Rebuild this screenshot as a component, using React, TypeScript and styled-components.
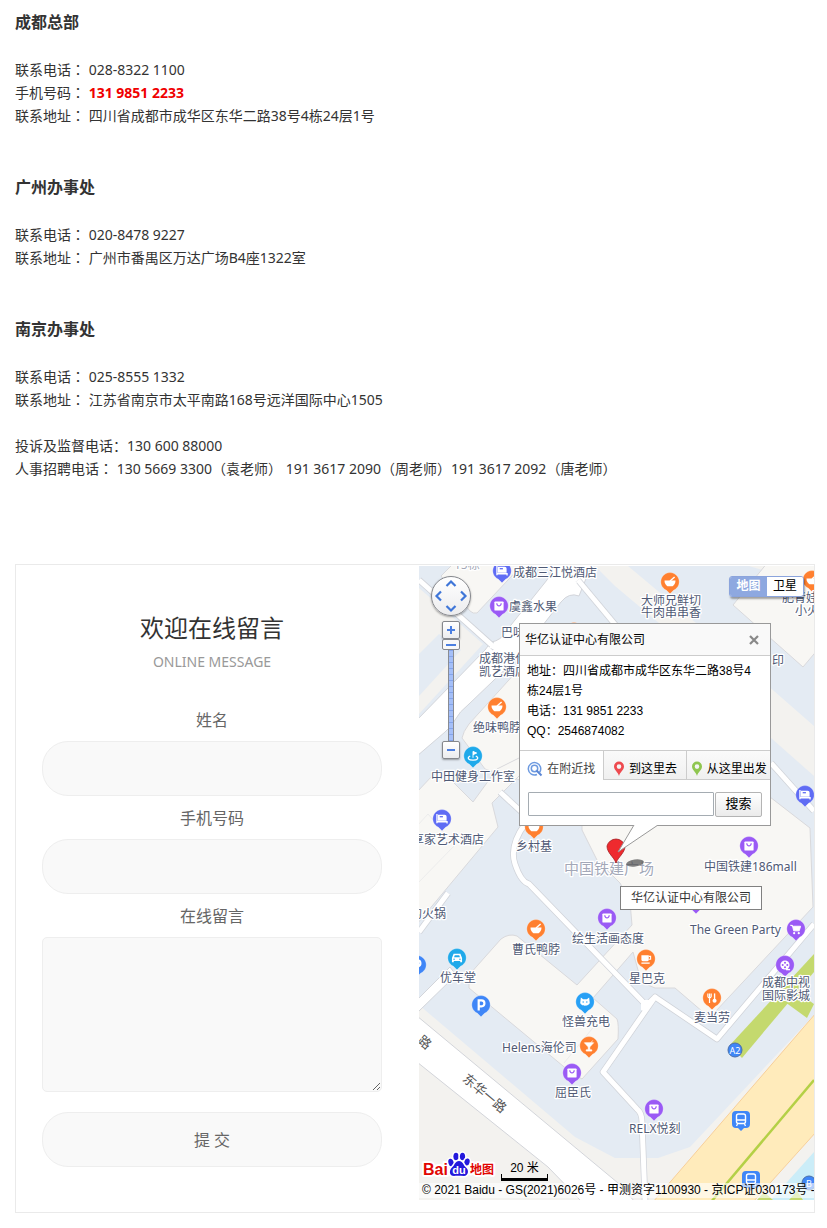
import React from "react";
import styled, { createGlobalStyle } from "styled-components";

const GlobalStyle = createGlobalStyle`
  * { box-sizing: border-box; }
  body {
    margin: 0;
    background: #fff;
    color: #333;
    font: 14px/23px "Noto Sans", "Noto Sans CJK SC", sans-serif;
  }
  button, input, textarea { font: inherit; color: inherit; margin: 0; }
`;

/* ---------- contact details ---------- */

const Page = styled.main`
  padding: 9px 12px 15px 15px;
`;

const Office = styled.section`
  margin-bottom: 47px;
`;

const OfficeName = styled.h2`
  margin: 0 0 22px;
  font-size: 16px;
  line-height: 27px;
  font-weight: 700;
`;

const Line = styled.p`
  margin: 0;
`;

const Hotline = styled.strong`
  color: #f00000;
`;

const MidColon = styled.span`
  font-family: "Noto Sans CJK TC", sans-serif;
  line-height: 1;
`;

const Extra = styled.section`
  margin: -24px 0 84px;
`;

const Colon = () => <MidColon lang="zh-Hant">：</MidColon>;

/* ---------- message form ---------- */

const Panel = styled.section`
  display: grid;
  grid-template-columns: minmax(0, 392fr) minmax(0, 395fr);
  column-gap: 11px;
  border: 1px solid #eaeaea;
`;

const Form = styled.form`
  display: flex;
  flex-direction: column;
  padding: 45px 26px;
  text-align: center;
  color: #666;
  font-size: 16px;
`;

const FormTitle = styled.h3`
  margin: 0 0 1px;
  font-size: 24px;
  line-height: 36px;
  font-weight: 400;
  color: #333;
`;

const FormSubtitle = styled.p`
  margin: 0 0 21px;
  font-size: 14px;
  line-height: 30px;
  color: #999;
`;

const FieldLabel = styled.label`
  padding-top: 2px;
  line-height: 41px;
`;

const TextField = styled.input`
  width: 100%;
  height: 55px;
  padding: 0 20px;
  border: 1px solid #eee;
  border-radius: 26px;
  background: #f9f9f9;
`;

const MessageField = styled.textarea`
  display: block;
  width: 100%;
  height: 155px;
  padding: 10px 20px;
  border: 1px solid #eee;
  border-radius: 5px;
  background: #f9f9f9;
  resize: both;
`;

const Submit = styled.button`
  width: 100%;
  height: 55px;
  margin-top: 20px;
  padding: 2px 0 0;
  border: 1px solid #eee;
  border-radius: 26px;
  background: #f9f9f9;
  cursor: pointer;
`;

/* ---------- map ---------- */

const MapFrame = styled.div`
  position: relative;
  height: 634px;
  margin-top: 1px;
  overflow: hidden;
  background: #e4ebf3;
  font: 12px/20px "Liberation Sans", "Noto Sans CJK SC", sans-serif;
  color: #000;
`;

const MapDrawing = styled.svg`
  display: block;
  width: 100%;
  height: 100%;
  font: 12px "Noto Sans", "Noto Sans CJK SC", sans-serif;
`;

const Controls = styled.div`
  position: absolute;
  left: 12px;
  top: 10px;
  width: 40px;
  display: flex;
  flex-direction: column;
  align-items: center;
`;

const Compass = styled.div`
  display: grid;
  grid-template: repeat(3, 12px) / repeat(3, 12px);
  place-content: center;
  width: 40px;
  height: 40px;
  margin-bottom: 5px;
  border: 1px solid #85878c;
  border-radius: 50%;
  background: linear-gradient(#fff, #ececee);
  box-shadow: 0 1px 2px rgba(0, 0, 0, 0.35);
`;

const PanButton = styled.button<{ $row: number; $col: number }>`
  grid-row: ${(p) => p.$row};
  grid-column: ${(p) => p.$col};
  display: grid;
  place-items: center;
  padding: 0;
  border: 0;
  background: none;
`;

const ZoomButton = styled.button`
  display: grid;
  place-items: center;
  width: 18px;
  height: 18px;
  padding: 0;
  border: 1px solid #85878c;
  border-radius: 2px;
  background: linear-gradient(#fff, #ececee);
  box-shadow: 0 1px 2px rgba(0, 0, 0, 0.35);
`;

const ZoomSlider = styled.input`
  appearance: none;
  writing-mode: vertical-lr;
  direction: rtl;
  width: 18px;
  height: 102px;
  background:
    linear-gradient(90deg, #8a8c92 1px, transparent 1px 5px, #8a8c92 5px) center / 6px 100% no-repeat,
    repeating-linear-gradient(#a4bff8 0 5px, #84a4ea 5px 6px) center / 6px 100% no-repeat;

  &::-webkit-slider-runnable-track {
    width: 18px;
    height: 100%;
    background: none;
  }
  &::-webkit-slider-thumb {
    appearance: none;
    width: 18px;
    height: 11px;
    border: 1px solid #85878c;
    border-radius: 2px;
    background: linear-gradient(#4c7fe0, #4c7fe0) center / 10px 2px no-repeat, #f8f8f8;
  }
`;

const MapTypes = styled.div`
  position: absolute;
  right: 10px;
  top: 10px;
  display: flex;
  border: 1px solid #8ba4dc;
  border-radius: 3px;
  overflow: hidden;
  box-shadow: 1px 2px 2px rgba(0, 0, 0, 0.35);
`;

const MapType = styled.button<{ $active?: boolean }>`
  width: ${(p) => (p.$active ? 37 : 36)}px;
  height: 19px;
  padding: 0;
  border: 0;
  line-height: 19px;
  font-weight: ${(p) => (p.$active ? 700 : 400)};
  color: ${(p) => (p.$active ? "#fff" : "#000")};
  background: ${(p) => (p.$active ? "#8ea8e0" : "#fff")};
`;

const InfoWindow = styled.section`
  position: absolute;
  left: 100px;
  top: 57px;
  width: 252px;
  border: 1px solid #999;
  background: #fff;
`;

const InfoHeader = styled.header`
  display: flex;
  align-items: center;
  justify-content: space-between;
  height: 32px;
  padding: 0 10px 0 5px;
  border-bottom: 1px solid #ccc;
  background: #f9f9f9;
`;

const InfoTitle = styled.h4`
  margin: 0;
  font-size: 12px;
  font-weight: 400;
`;

const CloseButton = styled.button`
  display: grid;
  padding: 0;
  border: 0;
  background: none;
`;

const InfoBody = styled.div`
  height: 94px;
  padding: 5px 15px 0 7px;
`;

const Tabs = styled.div`
  display: flex;
  height: 30px;
  border-top: 1px solid #ccc;
`;

const Tab = styled.button<{ $active?: boolean }>`
  flex: 1 1 0;
  display: flex;
  align-items: center;
  justify-content: center;
  gap: 4px;
  padding: 8px 0 0;
  white-space: nowrap;
  border: 0;
  border-bottom: 1px solid ${(p) => (p.$active ? "#fff" : "#ccc")};
  color: ${(p) => (p.$active ? "#444" : "#000")};
  background: ${(p) => (p.$active ? "#fff" : "linear-gradient(#fafafa, #f0f0f0)")};

  & + & {
    border-left: 1px solid #ccc;
  }
`;

const SearchRow = styled.div`
  display: flex;
  align-items: center;
  gap: 1px;
  height: 45px;
  padding: 0 8px;
`;

const SearchInput = styled.input`
  flex: 1;
  min-width: 0;
  height: 24px;
  margin-top: 3px;
  padding: 0 4px;
  border: 1px solid #a5acb2;
  border-radius: 1px;
  background: #fff;
`;

const SearchButton = styled.button`
  width: 47px;
  height: 25px;
  margin-top: 3px;
  padding: 0;
  border: 1px solid #b4b4b4;
  border-radius: 2px;
  font-size: 13px;
  background: linear-gradient(#fff, #ebebeb);
`;

const Tail = styled.svg`
  position: absolute;
  left: 90px;
  top: 201px;
  width: 60px;
  height: 30px;
`;

const MarkerLabel = styled.div`
  position: absolute;
  left: 201px;
  top: 320px;
  height: 24px;
  padding: 0 10px;
  border: 1px solid #808080;
  background: #fff;
  line-height: 22px;
  color: #333;
`;

const Scale = styled.div`
  position: absolute;
  left: 82px;
  bottom: 19px;
  width: 47px;
  height: 27px;
  padding-top: 4px;
  line-height: 20px;
  text-align: center;
  border: solid #000;
  border-width: 0 0 3px;
  background:
    linear-gradient(#000, #000) left bottom / 1px 4px no-repeat,
    linear-gradient(#000, #000) right bottom / 1px 4px no-repeat;
`;

const Copyright = styled.div`
  position: absolute;
  left: 0;
  right: 0;
  bottom: 2px;
  height: 15px;
  padding-left: 3px;
  line-height: 15px;
  white-space: nowrap;
  background: rgba(255, 255, 255, 0.6);
`;

const Logo = styled.a`
  position: absolute;
  left: 2px;
  bottom: 20px;
  display: block;
  height: 30px;

  svg {
    display: block;
    font: 700 16px "Liberation Sans", "Noto Sans CJK SC", sans-serif;
  }
`;

/* ---------- map data ---------- */

type PinKind =
  | "hotel" | "bag" | "bowl" | "golf" | "cart" | "film" | "cup"
  | "car" | "park" | "cat" | "drink" | "fork";

const PIN_COLORS: Record<PinKind, string> = {
  hotel: "#5f6cf4", bag: "#9a5af5", cart: "#9a5af5", film: "#9a5af5",
  bowl: "#ff8030", cup: "#ff8030", drink: "#ff8030", fork: "#ff8030",
  golf: "#1fa9ea", car: "#1fa9ea", cat: "#27a0f5", park: "#3f86f7",
};

const GLYPHS: Record<PinKind, React.ReactNode> = {
  hotel: (
    <>
      <path d="M-5.500-5.500v10M-5.500 3h11v1.800" fill="none" stroke="#fff" strokeWidth="1.400" />
      <path d="M-4.500-4.500H3a2 2 0 0 1 2 2V2h-9.500z" fill="#fff" />
      <path d="M-2.500-2.500H1" stroke="#5f6cf4" strokeWidth="1.400" />
    </>
  ),
  bag: (
    <>
      <rect x="-5" y="-5" width="10" height="10" rx="1" fill="#fff" />
      <path d="M-2.400-3a2.400 2.800 0 0 0 4.800 0" fill="none" stroke="#9a5af5" strokeWidth="1.300" />
    </>
  ),
  bowl: (
    <>
      <path d="M-6-1.500h12c0 3-1.500 5-3.200 6h-5.600c-1.700-1-3.200-3-3.200-6z" fill="#fff" />
      <path d="M0-1l5-4.500" stroke="#fff" strokeWidth="1.500" />
    </>
  ),
  golf: (
    <>
      <path d="M0 2v-7l4 1.800-4 1.800" fill="#fff" stroke="#fff" />
      <path d="M-3 0c-4 2-2 4.500 3 4.500S7 2 3 0" fill="none" stroke="#fff" strokeWidth="1.400" />
    </>
  ),
  cart: (
    <>
      <path d="M-6-4h2l1.500 6h6l1.500-5h-8z" fill="#fff" stroke="#fff" />
      <circle cx="-2" cy="4.500" r="1.200" fill="#fff" />
      <circle cx="3" cy="4.500" r="1.200" fill="#fff" />
    </>
  ),
  film: (
    <>
      <circle r="5" fill="#fff" />
      <path d="M1 5h4.500" stroke="#fff" strokeWidth="1.500" />
      {[[0, -2.500], [2.500, 0], [0, 2.500], [-2.500, 0]].map(([x, y]) => (
        <circle key={`${x},${y}`} cx={x} cy={y} r="1.100" fill="#9a5af5" />
      ))}
    </>
  ),
  cup: (
    <>
      <path d="M-5-4h8v4.500a2 2 0 0 1-2 2h-4a2 2 0 0 1-2-2z" fill="#fff" />
      <path d="M3-2.800h2v3h-2M-5 4.500h9" fill="none" stroke="#fff" strokeWidth="1.200" />
    </>
  ),
  car: (
    <>
      <path d="M-5.500 0l1.800-4.500h7.400L5.500 0v4.500h-2V3.200h-7v1.300h-2z" fill="#fff" />
      <path d="M-3.200-.8l.8-2.200h4.800l.8 2.200z" fill="#1fa9ea" />
      <circle cx="-3.200" cy="1.400" r=".8" fill="#1fa9ea" />
      <circle cx="3.200" cy="1.400" r=".8" fill="#1fa9ea" />
    </>
  ),
  park: (
    <path d="M-2.500 6v-11h3a3.200 3.200 0 0 1 0 6.400H-2.500" fill="none" stroke="#fff" strokeWidth="2.400" />
  ),
  cat: (
    <>
      <path d="M-4.500-5l2.500 2h4l2.500-2 .5 4.500C6 2.500 3 4 0 4s-6-1.500-5-4.500z" fill="#fff" />
      <circle cx="-2" cy="0" r=".8" fill="#27a0f5" />
      <circle cx="2" cy="0" r=".8" fill="#27a0f5" />
    </>
  ),
  drink: (
    <path d="M-5-3.500h10L.8 1v3.200H3v1.300h-6V4.200h2.200V1zM2-3.500L4-6" fill="#fff" stroke="#fff" strokeWidth=".8" />
  ),
  fork: (
    <>
      <path d="M-4.500-5v3a1.800 1.800 0 0 0 3.600 0v-3M-2.700-5V5.500" fill="none" stroke="#fff" strokeWidth="1.300" />
      <path d="M2.800-5V2" stroke="#fff" strokeWidth="1.500" />
      <circle cx="2.800" cy="3" r="2.200" fill="#fff" />
    </>
  ),
};

const PINS: [PinKind, number, number][] = [
  ["hotel", 83, 5], ["bag", 80, 40], ["bowl", 78, 141], ["golf", 54, 190],
  ["bowl", 251, 16], ["bowl", 393, 14], ["bowl", 155, 66], ["hotel", 386, 229],
  ["hotel", 23, 253], ["bowl", 115, 261], ["bag", 330, 280], ["bag", 188, 352],
  ["bowl", 117, 363], ["cart", 377, 363], ["film", 366, 399], ["cup", 227, 393],
  ["car", 38, 392], ["park", 62, 439], ["park", -2, 399], ["cat", 166, 436],
  ["drink", 170, 480], ["bag", 153, 507], ["fork", 293, 432], ["bag", 235, 543],
  ["bag", 277, 336],
];

const PLACES: [string, number, number][] = [
  ["成都三江悦酒店", 94, 11], ["虞鑫水果", 90, 45], ["巴味", 82, 71],
  ["成都港代", 60, 97], ["凯艺酒店", 60, 110], ["绝味鸭脖", 54, 166],
  ["中田健身工作室", 12, 215], ["大师兄鲜切", 222, 39], ["牛肉串串香", 222, 51],
  ["肥青娃", 363, 36], ["小火", 376, 49], ["印", 353, 99],
  ["享家艺术酒店", -7, 278], ["乡村基", 97, 285], ["中国铁建186mall", 285, 305],
  ["的火锅", -9, 352], ["绘生活画态度", 153, 377], ["The Green Party", 271, 368],
  ["曹氏鸭脖", 93, 388], ["优车堂", 21, 416], ["星巴克", 210, 417],
  ["怪兽充电", 143, 460], ["麦当劳", 275, 456], ["成都中视", 343, 421],
  ["国际影城", 343, 434], ["Helens海伦司", 83, 486], ["屈臣氏", 136, 531],
  ["RELX悦刻", 210, 567],
];

const LANES = [
  "M0 14L76 82",
  "M159 14L204 68",
  "M81 226L108 251",
  "M106 258Q90 280 96 298T110 318L226 438",
  "M230 437L236 431L184 506L218 543Q223 547 223 556L226 634",
  "M236 431L298 473L395 358",
  "M352 197L395 245",
  "M0 366L29 327",
];

const Pin = ({ kind, x, y }: { kind: PinKind; x: number; y: number }) => (
  <g transform={`translate(${x} ${y})`}>
    <path
      d="M-3.500 8.300A9.200 9.200 0 1 1 3.500 8.300L0 11.800z"
      fill={PIN_COLORS[kind]}
      stroke="#fff"
      strokeOpacity=".5"
      strokeWidth=".5"
    />
    <g transform="scale(.92)">{GLYPHS[kind]}</g>
  </g>
);

const Bus = ({ x, y }: { x: number; y: number }) => (
  <g transform={`translate(${x} ${y})`}>
    <path d="M-5-9H5a4 4 0 0 1 4 4V4a4 4 0 0 1-4 4H3L0 11-3 8H-5a4 4 0 0 1-4-4V-5a4 4 0 0 1 4-4z" fill="#3f86f7" />
    <rect x="-4.500" y="-6" width="9" height="9.500" rx="2" fill="none" stroke="#fff" strokeWidth="1.400" />
    <path d="M-4 0H4M-3.500 4l-1 2M3.500 4l1 2" stroke="#fff" strokeWidth="1.300" />
  </g>
);

const BaseMap = () => (
  <MapDrawing viewBox="0 0 395 634" preserveAspectRatio="xMidYMid slice" role="img" aria-label="地图">
    <g fill="#f3f2ef">
      <path d="M0 439L156 571L196 592H239L271 581L395 449V634H0z" />
      <path d="M176 0H209L283 62L395 160V207L352 170L240 57L196 20z" />
      <path d="M352 140L395 174V210L352 172z" />
      <path d="M330 0L395 0V20z" />
    </g>

    <g fill="#f8f7f4" stroke="#d9d9dc">
      <path d="M22 10L34-2H104L58 47Q54 48 51 45z" />
      <path d="M314 39L349-4L400-6V82L384 101z" />
      <path d="M43 172Q44 166 50 158L99 104L160 60V215H104L66 203z" />
      <path d="M-2 226L14 209Q22 204 29 211L54 236L78 203L104 190V206L73 237L79 261L-2 358z" />
      <path d="M163 231V264L178 294L201 317L211 336L213 359L158 419L98 370Q90 367 82 373L50 409V422L150 505L163 513L199 473Q200 458 198 453L174 432L214 386L219 404Q222 418 236 422H256L284 446H296L394 341L391 262L351 231z" />
      <path d="M-2 260L9 248L36 279L-2 318" fill="none" stroke="#ececec" />
      <path d="M182 452L145 497" stroke="#ececec" />
    </g>
    <path d="M0 22L30 48L64 78L0 148z" fill="#f3f2ef" />
    <path d="M0 88L20 68L42 84L0 130z" fill="#e4ebf3" />

    <g fill="#fff" stroke="#d3d5da">
      <path d="M136-2L128 14L88 64Q82 75 72 76L66 84L-2 154V190L26 166Q33 160 36 154Q40 146 50 138L98 92L142 36Q150 26 160 30L164 20L173-2z" />
      <path d="M-2 450L199 617L216 636H163L129 601L-2 496z" />
      <path d="M-2 434L31 401L37 409L-2 447z" />
    </g>
    <g fill="none" strokeLinejoin="round">
      {LANES.map((d) => <path key={d} d={d} stroke="#d0d3d9" strokeWidth="6.500" />)}
      {LANES.map((d) => <path key={d} d={d} stroke="#fff" strokeWidth="5" />)}
    </g>
    <path d="M222 434H234L227 446L222 444z" fill="#fff" />
    <path d="M130 18L158 16L154 26L140 34L92 86L70 82L76 76Q84 74 90 66z" fill="#fff" />

    <path d="M397 447L234 636H334L397 566z" fill="#ffebbb" stroke="#f7cf9a" />
    <path d="M395 514L292 636" stroke="#b4d046" strokeWidth="2.500" />
    <path d="M395 586L352 634H395z" fill="#cbedf8" />
    <path d="M338 634L345 626L354 634zM370 634L378 625L384 634z" fill="#c4d96e" />
    <path d="M311 479L395 388V406L323 492z" fill="#c4d96e" />
    <path d="M366 436L378 426L395 438L388 452z" fill="#c4d96e" />

    {PINS.map(([kind, x, y]) => <Pin key={`${x},${y}`} kind={kind} x={x} y={y} />)}
    <Bus x={322} y={554} />
    <Bus x={332} y={614} />

    <g fontSize="9" fill="#fff" textAnchor="middle">
      <circle cx="316" cy="484" r="7" fill="#3f86f7" stroke="#4a6ea8" />
      <text x="316" y="488">A2</text>
      <circle cx="390" cy="617" r="7" fill="#3f86f7" stroke="#4a6ea8" />
      <text x="390" y="621">B</text>
    </g>

    <g fill="#505a75" stroke="#fff" strokeWidth="2.500" strokeLinejoin="round" paintOrder="stroke">
      {PLACES.map(([name, x, y]) => <text key={name} x={x} y={y}>{name}</text>)}
      <text x="35" y="3" fill="#a3a8b5">15栋</text>
      <text x="145" y="308" fill="#a3a8b8" fontSize="15">中国铁建广场</text>
      <g fill="#555" fontSize="13" textAnchor="middle">
        <text transform="translate(66 527) rotate(40)" y="5">东华一路</text>
        <text transform="translate(6 476) rotate(40)" y="5">路</text>
      </g>
    </g>

    <ellipse cx="216" cy="297" rx="9" ry="3.500" transform="rotate(-8 216 297)" fill="#555" opacity=".75" />
    <path d="M197 297C195 291 188 287 188 280A9.300 9.300 0 0 1 206 280C206 287 199 291 197 297z" fill="#ee2a2e" stroke="#a51a20" strokeWidth=".8" />
  </MapDrawing>
);

const Arrow = ({ angle }: { angle: number }) => (
  <svg width="12" height="12" viewBox="-6 -6 12 12" aria-hidden="true">
    <path d="M-4.500 2L0-2.500L4.500 2" transform={`rotate(${angle})`} fill="none" stroke="#3f76d8" strokeWidth="2.200" />
  </svg>
);

const Sign = ({ plus }: { plus?: boolean }) => (
  <svg width="12" height="12" viewBox="0 0 12 12" aria-hidden="true">
    <path d={plus ? "M2 6h8M6 2v8" : "M2 6h8"} stroke="#4c7fe0" strokeWidth="2" />
  </svg>
);

const Drop = ({ color }: { color: string }) => (
  <svg width="12" height="16" viewBox="0 0 12 16" aria-hidden="true">
    <path
      d="M6 15C5 11 1 9 1 5.500a5 5 0 0 1 10 0C11 9 7 11 6 15zM6 3.300a2.300 2.300 0 1 0 0 4.600 2.300 2.300 0 0 0 0-4.600z"
      fill={color}
      fillRule="evenodd"
    />
  </svg>
);

const BaiduLogo = () => (
  <Logo href="#" aria-label="百度地图">
    <svg width="76" height="30" viewBox="0 0 76 30">
      <g stroke="#fff" strokeWidth="4" strokeLinejoin="round" paintOrder="stroke">
        <text x="2" y="25" fill="#e10602">Bai</text>
        <text x="49" y="24" fill="#e10602" fontSize="12">地图</text>
        <g fill="#2319dc" strokeWidth="3">
          <ellipse cx="30" cy="12.500" rx="2.600" ry="3.800" transform="rotate(-15 30 12.500)" />
          <ellipse cx="35" cy="6.500" rx="2.600" ry="3.800" />
          <ellipse cx="41.500" cy="6.500" rx="2.600" ry="3.800" />
          <ellipse cx="46" cy="12" rx="2.600" ry="3.600" transform="rotate(15 46 12)" />
          <path d="M38 11c4 0 4 4 7 6.500 3.500 3 2 8.500-2 8.500-3 0-7-.5-10 0-4.500 0-5.500-5-2-8.500C34 15 34 11 38 11z" />
        </g>
      </g>
      <text x="38" y="24" fill="#fff" fontSize="11" textAnchor="middle">du</text>
    </svg>
  </Logo>
);

const ContactMap = () => (
  <MapFrame>
    <BaseMap />

    <Controls>
      <Compass>
        <PanButton type="button" aria-label="向上" $row={1} $col={2}><Arrow angle={0} /></PanButton>
        <PanButton type="button" aria-label="向左" $row={2} $col={1}><Arrow angle={-90} /></PanButton>
        <PanButton type="button" aria-label="向右" $row={2} $col={3}><Arrow angle={90} /></PanButton>
        <PanButton type="button" aria-label="向下" $row={3} $col={2}><Arrow angle={180} /></PanButton>
      </Compass>
      <ZoomButton type="button" aria-label="放大"><Sign plus /></ZoomButton>
      <ZoomSlider type="range" min={3} max={19} defaultValue={19} aria-label="缩放级别" />
      <ZoomButton type="button" aria-label="缩小"><Sign /></ZoomButton>
    </Controls>

    <MapTypes>
      <MapType type="button" $active>地图</MapType>
      <MapType type="button">卫星</MapType>
    </MapTypes>

    <BaiduLogo />
    <Scale>20 米</Scale>
    <Copyright>© 2021 Baidu - GS(2021)6026号 - 甲测资字1100930 - 京ICP证030173号 -</Copyright>
    <MarkerLabel>华亿认证中心有限公司</MarkerLabel>

    <InfoWindow>
      <InfoHeader>
        <InfoTitle>华亿认证中心有限公司</InfoTitle>
        <CloseButton type="button" aria-label="关闭">
          <svg width="12" height="12" viewBox="0 0 12 12" aria-hidden="true">
            <path d="M2 2l8 8M10 2l-8 8" stroke="#888" strokeWidth="2.200" />
          </svg>
        </CloseButton>
      </InfoHeader>
      <InfoBody>
        <Line>地址：四川省成都市成华区东华二路38号4栋24层1号</Line>
        <Line>电话：131 9851 2233</Line>
        <Line>QQ：2546874082</Line>
      </InfoBody>
      <Tabs>
        <Tab type="button" $active>
          <svg width="16" height="16" viewBox="0 0 16 16" aria-hidden="true">
            <path d="M12.500 11.500A6.200 6.200 0 1 0 10 13.500" fill="none" stroke="#6d9ae0" strokeWidth="1.500" />
            <circle cx="7.500" cy="7.500" r="3.200" fill="none" stroke="#6d9ae0" strokeWidth="1.500" />
            <path d="M9.500 9.500l5 5" stroke="#5b86d4" strokeWidth="2" />
          </svg>
          在附近找
        </Tab>
        <Tab type="button"><Drop color="#ee4a4f" />到这里去</Tab>
        <Tab type="button"><Drop color="#8fc650" />从这里出发</Tab>
      </Tabs>
      <SearchRow>
        <SearchInput type="text" aria-label="在附近找" />
        <SearchButton type="button">搜索</SearchButton>
      </SearchRow>
      <Tail viewBox="0 0 60 30" aria-hidden="true">
        <path d="M24 0L8 27L48 0z" fill="#fff" />
        <path d="M24 0L8 27L48 0" fill="none" stroke="#999" />
      </Tail>
    </InfoWindow>
  </MapFrame>
);

export default function App() {
  return (
    <>
      <GlobalStyle />
      <Page>
        <Office>
          <OfficeName>成都总部</OfficeName>
          <Line>联系电话<Colon /> 028-8322 1100</Line>
          <Line>手机号码<Colon /> <Hotline>131 9851 2233</Hotline></Line>
          <Line>联系地址<Colon /> 四川省成都市成华区东华二路38号4栋24层1号</Line>
        </Office>
        <Office>
          <OfficeName>广州办事处</OfficeName>
          <Line>联系电话<Colon /> 020-8478 9227</Line>
          <Line>联系地址<Colon /> 广州市番禺区万达广场B4座1322室</Line>
        </Office>
        <Office>
          <OfficeName>南京办事处</OfficeName>
          <Line>联系电话<Colon /> 025-8555 1332</Line>
          <Line>联系地址<Colon /> 江苏省南京市太平南路168号远洋国际中心1505</Line>
        </Office>
        <Extra>
          <Line>投诉及监督电话：130 600 88000</Line>
          <Line>
            人事招聘电话<Colon /> 130 5669 3300（袁老师） 191 3617 2090（周老师）191 3617 2092（唐老师）
          </Line>
        </Extra>

        <Panel>
          <Form onSubmit={(e) => e.preventDefault()}>
            <FormTitle>欢迎在线留言</FormTitle>
            <FormSubtitle>ONLINE MESSAGE</FormSubtitle>
            <FieldLabel htmlFor="name">姓名</FieldLabel>
            <TextField id="name" type="text" />
            <FieldLabel htmlFor="phone">手机号码</FieldLabel>
            <TextField id="phone" type="tel" />
            <FieldLabel htmlFor="message">在线留言</FieldLabel>
            <MessageField id="message" />
            <Submit type="submit">提 交</Submit>
          </Form>
          <ContactMap />
        </Panel>
      </Page>
    </>
  );
}
